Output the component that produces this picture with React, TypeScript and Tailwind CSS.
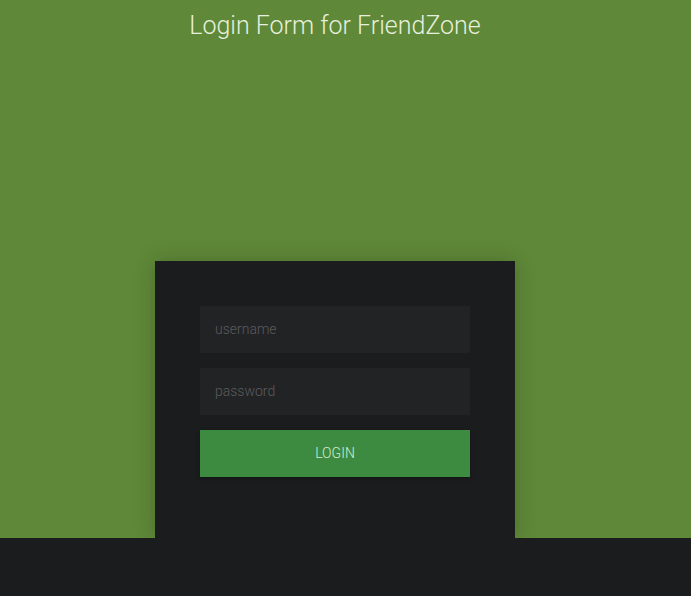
export default function App() {
  return (
    <div className="flex min-h-[596px] flex-col bg-[#5f8838] font-['Roboto',sans-serif]">
      <div className="flex w-[670px] flex-1 flex-col items-center">
        <h1 className="mt-[9px] text-[25px] font-light leading-[33px] text-[#e6f0dc]">
          Login Form for FriendZone
        </h1>
        <div className="mt-[219px] flex w-[360px] flex-1 flex-col gap-[15px] bg-[#1b1c1e] px-[45px] pt-[45px] shadow-[0_0_20px_rgba(0,0,0,0.2)]">
          <input
            className="h-[47px] w-full bg-[#222325] px-[15px] pb-[2px] text-[14px] font-light text-[#ccc] outline-none placeholder:text-[#5a5b5d]"
            placeholder="username"
          />
          <input
            type="password"
            className="h-[47px] w-full bg-[#222325] px-[15px] pb-[2px] text-[14px] font-light text-[#ccc] outline-none placeholder:text-[#5a5b5d]"
            placeholder="password"
          />
          <button className="h-[47px] w-full bg-[#3d8b40] text-[14px] font-light uppercase text-[#d4ecd0] shadow-[0_2px_4px_rgba(0,0,0,0.25)]">
            Login
          </button>
        </div>
      </div>
      <div className="h-[58px] bg-[#1b1c1e]" />
    </div>
  );
}
